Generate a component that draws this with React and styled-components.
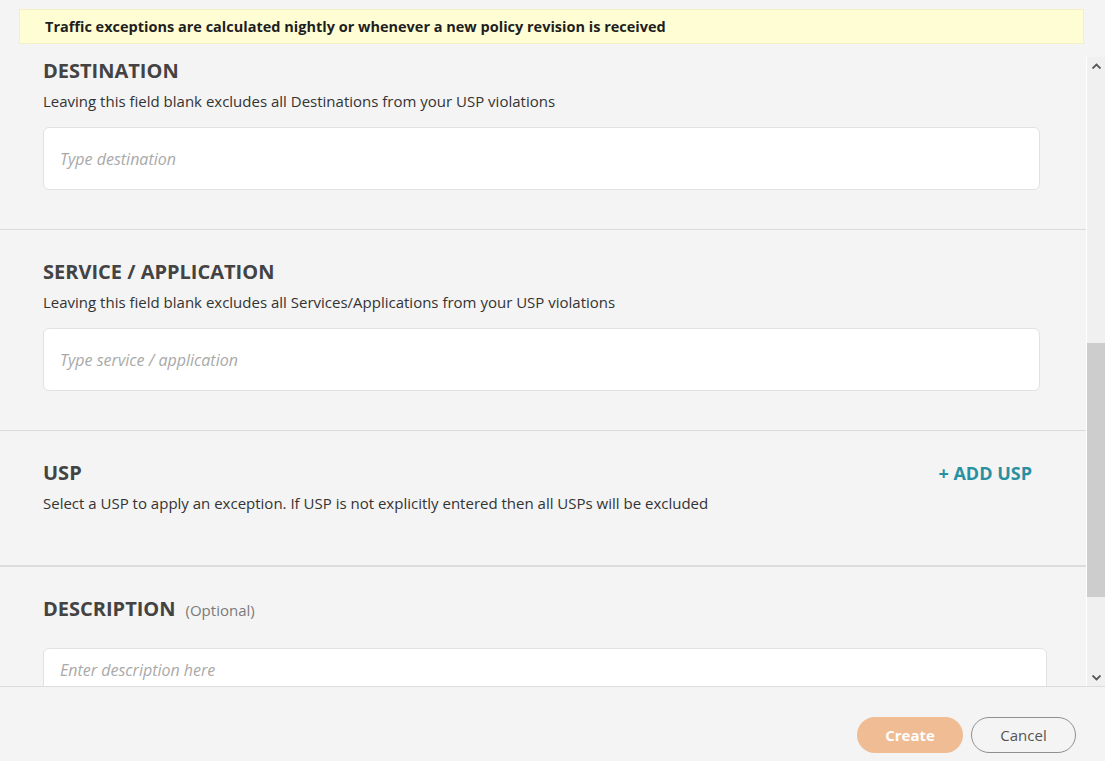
import React from 'react'
import styled, { createGlobalStyle } from 'styled-components'

const Global = createGlobalStyle`
  html, body {
    margin: 0;
    padding: 0;
    background: #f4f4f4;
    font-family: 'Open Sans', 'Noto Sans', sans-serif;
  }
`

function Chevron({ up }) {
  return (
    <svg width="9" height="6" viewBox="0 0 9 6">
      <polyline
        points={up ? '0.5,5.5 4.5,1.5 8.5,5.5' : '0.5,0.5 4.5,4.5 8.5,0.5'}
        fill="none"
        stroke="#555"
        strokeWidth="1.8"
      />
    </svg>
  )
}

function Section({ title, optional, hint, placeholder, last }) {
  return (
    <Block last={last}>
      <HeadRow>
        <Heading>
          {title}
          {optional && <Optional>(Optional)</Optional>}
        </Heading>
      </HeadRow>
      {hint && <Hint>{hint}</Hint>}
      {placeholder && (
        <Field tall={!last}>
          <Placeholder>{placeholder}</Placeholder>
        </Field>
      )}
    </Block>
  )
}

export default function App() {
  return (
    <>
      <Global />
      <Page>
        <BannerWrap>
          <Banner>Traffic exceptions are calculated nightly or whenever a new policy revision is received</Banner>
        </BannerWrap>
        <Middle>
          <Viewport>
            <Scroller>
              <Section
                title="DESTINATION"
                hint="Leaving this field blank excludes all Destinations from your USP violations"
                placeholder="Type destination"
              />
              <Section
                title="SERVICE / APPLICATION"
                hint="Leaving this field blank excludes all Services/Applications from your USP violations"
                placeholder="Type service / application"
              />
              <UspBlock>
                <HeadRow>
                  <Heading>USP</Heading>
                  <AddLink>+ ADD USP</AddLink>
                </HeadRow>
                <Hint>Select a USP to apply an exception. If USP is not explicitly entered then all USPs will be excluded</Hint>
              </UspBlock>
              <Section
                title="DESCRIPTION"
                optional
                placeholder="Enter description here"
                last
              />
            </Scroller>
          </Viewport>
          <ScrollBar>
            <Arrow><Chevron up /></Arrow>
            <Track>
              <Thumb />
            </Track>
            <Arrow><Chevron /></Arrow>
          </ScrollBar>
        </Middle>
        <Footer>
          <Primary>Create</Primary>
          <Secondary>Cancel</Secondary>
        </Footer>
      </Page>
    </>
  )
}

const Page = styled.div`
  height: 761px;
  display: flex;
  flex-direction: column;
  overflow: hidden;
`

const BannerWrap = styled.div`
  padding: 9px 21px 0 19px;
`

const Banner = styled.div`
  height: 35px;
  box-sizing: border-box;
  display: flex;
  align-items: center;
  padding-left: 25px;
  background: #fffdd4;
  border: 1px solid #f4f0c6;
  color: #1e1e1e;
  font-size: 14.5px;
  font-weight: 700;
`

const Middle = styled.div`
  flex: 1;
  min-height: 0;
  margin-top: 13px;
  display: flex;
`

const Viewport = styled.div`
  flex: 1;
  overflow: hidden;
`

const Scroller = styled.div`
  margin-top: -28px;
`

const Block = styled.div`
  padding: 29px 46px 39px 43px;
  border-bottom: ${p => (p.last ? 'none' : '1px solid #dcdcdc')};
`

const UspBlock = styled.div`
  padding: 29px 54px 52px 43px;
  border-bottom: 2px solid #dcdcdc;
`

const HeadRow = styled.div`
  display: flex;
  align-items: flex-start;
  justify-content: space-between;
  height: 28px;
`

const Heading = styled.h2`
  margin: 0;
  font-size: 20px;
  font-weight: 700;
  color: #434343;
  line-height: 26px;
  display: flex;
  align-items: baseline;
`

const Optional = styled.span`
  margin-left: 10px;
  font-size: 15px;
  font-weight: 400;
  color: #7a7a7a;
`

const AddLink = styled.span`
  font-size: 18px;
  font-weight: 700;
  line-height: 26px;
  color: #2990a2;
  cursor: pointer;
`

const Hint = styled.p`
  margin: 5px 0 0;
  font-size: 15px;
  line-height: 20px;
  color: #333;
`

const Field = styled.div`
  margin-top: ${p => (p.tall ? 16 : 24)}px;
  margin-right: ${p => (p.tall ? 0 : -7)}px;
  height: 63px;
  box-sizing: border-box;
  background: #fff;
  border: 1px solid #e2e2e2;
  border-radius: 6px;
  display: flex;
  padding-left: 16px;
  align-items: ${p => (p.tall ? 'center' : 'flex-start')};
  padding-top: ${p => (p.tall ? 0 : 10)}px;
`

const Placeholder = styled.span`
  font-size: 16px;
  font-style: italic;
  color: #a9a9a9;
`

const ScrollBar = styled.div`
  width: 18px;
  border-left: 1px solid #fff;
  background: #f0f0f0;
  display: flex;
  flex-direction: column;
`

const Arrow = styled.div`
  height: 17px;
  display: flex;
  align-items: center;
  justify-content: center;
`

const Track = styled.div`
  flex: 1;
  display: flex;
  flex-direction: column;
`

const Thumb = styled.div`
  margin-top: 269px;
  height: 254px;
  background: #cdcdcd;
`

const Footer = styled.div`
  height: 75px;
  box-sizing: border-box;
  border-top: 1px solid #dcdcdc;
  display: flex;
  justify-content: flex-end;
  align-items: flex-start;
  gap: 8px;
  padding: 30px 29px 0 0;
`

const Primary = styled.button`
  width: 106px;
  height: 36px;
  border: none;
  border-radius: 18px;
  background: #efbc94;
  color: #fff;
  font-family: inherit;
  font-size: 15px;
  font-weight: 700;
`

const Secondary = styled.button`
  width: 105px;
  height: 36px;
  border: 1px solid #8f8f8f;
  border-radius: 18px;
  background: transparent;
  color: #555;
  font-family: inherit;
  font-size: 15px;
`
